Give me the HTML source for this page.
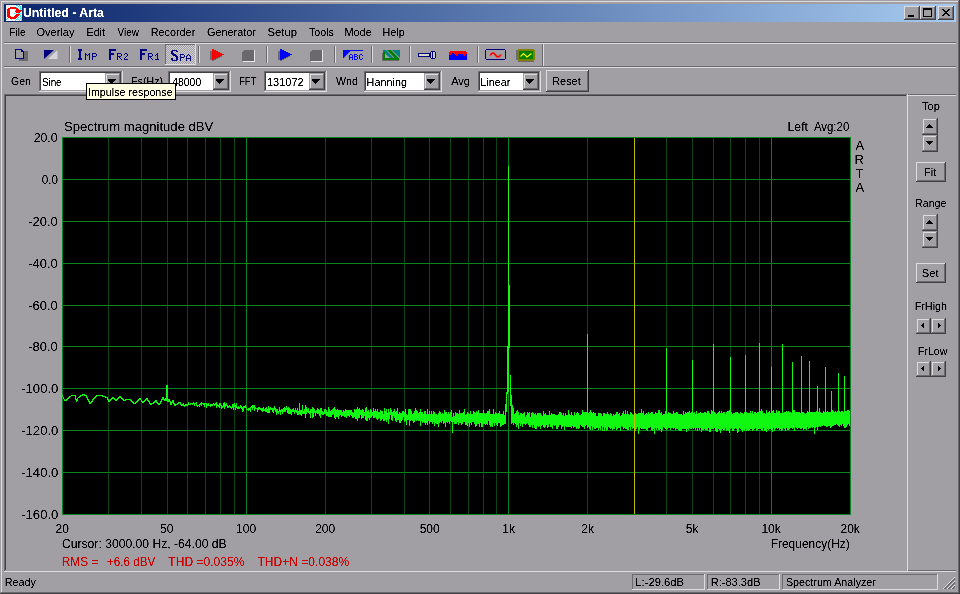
<!DOCTYPE html>
<html><head><meta charset="utf-8"><style>
html,body{margin:0;padding:0;width:960px;height:594px;overflow:hidden;background:#a19fa4;}
svg{display:block;font-family:"Liberation Sans", sans-serif;}
</style></head><body>
<svg width="960" height="594" viewBox="0 0 960 594" shape-rendering="crispEdges">
<defs><filter id="tx" x="0" y="0" width="100%" height="100%" filterUnits="userSpaceOnUse"><feComponentTransfer><feFuncA type="linear" slope="2.5" intercept="-0.6"/></feComponentTransfer></filter></defs>
<rect x="0" y="0" width="960" height="594" fill="#a19fa4"/>
<rect x="1" y="1" width="957" height="1" fill="#dcdcdc"/>
<rect x="1" y="1" width="1" height="591" fill="#dcdcdc"/>
<rect x="1" y="592" width="958" height="1" fill="#6c6a70"/>
<rect x="958" y="1" width="1" height="592" fill="#6c6a70"/>
<rect x="0" y="593" width="960" height="1" fill="#404040"/>
<rect x="959" y="0" width="1" height="594" fill="#404040"/>
<defs><linearGradient id="tg" x1="0" x2="1" y1="0" y2="0"><stop offset="0" stop-color="#0a246a"/><stop offset="1" stop-color="#a6caf0"/></linearGradient></defs>
<rect x="4" y="4" width="952" height="18" fill="url(#tg)"/>
<rect x="6" y="5" width="16" height="16" fill="#e8f4fa"/>
<path d="M16 5h2v1h-2zM19 5h1v1h-1zM18 6h1v1h-1zM20 6h1v1h-1zM16 7h1v1h-1zM20 7h1v1h-1zM17 8h1v1h-1zM20 8h2v1h-2zM20 9h1v1h-1zM15 10h1v1h-1zM16 11h1v1h-1zM17 12h1v1h-1zM14 13h1v1h-1zM18 13h1v1h-1zM20 13h1v1h-1zM17 15h1v1h-1zM20 15h1v1h-1zM20 16h1v1h-1zM8 17h1v1h-1zM18 17h1v1h-1zM21 17h1v1h-1zM7 18h1v1h-1zM17 18h1v1h-1zM20 18h1v1h-1zM6 19h1v1h-1zM11 19h1v1h-1zM16 19h1v1h-1zM18 19h1v1h-1zM21 19h1v1h-1zM15 20h1v1h-1zM19 20h1v1h-1zM21 20h1v1h-1z" fill="#2ee0f0"/>
<path d="M10 7h6v1h-6zM8 8h10v1h-10zM7 9h4v1h-4zM16 9h3v1h-3zM7 10h3v1h-3zM16 10h6v1h-6zM7 11h3v1h-3zM15 11h6v1h-6zM7 12h3v1h-3zM16 12h4v1h-4zM7 13h3v1h-3zM7 14h3v1h-3zM16 14h4v1h-4zM7 15h3v1h-3zM15 15h4v1h-4zM7 16h4v1h-4zM14 16h4v1h-4zM8 17h9v1h-9zM10 18h6v1h-6z" fill="#ff0000"/>
<rect x="10" y="9" width="4" height="7" fill="#ffffff"/>
<rect x="904" y="6" width="16" height="14" fill="#a19fa4"/>
<rect x="904" y="6" width="15" height="1" fill="#dcdcdc"/>
<rect x="904" y="6" width="1" height="13" fill="#dcdcdc"/>
<rect x="905" y="18" width="14" height="1" fill="#6c6a70"/>
<rect x="918" y="7" width="1" height="12" fill="#6c6a70"/>
<rect x="904" y="19" width="16" height="1" fill="#404040"/>
<rect x="919" y="6" width="1" height="14" fill="#404040"/>
<rect x="920" y="6" width="16" height="14" fill="#a19fa4"/>
<rect x="920" y="6" width="15" height="1" fill="#dcdcdc"/>
<rect x="920" y="6" width="1" height="13" fill="#dcdcdc"/>
<rect x="921" y="18" width="14" height="1" fill="#6c6a70"/>
<rect x="934" y="7" width="1" height="12" fill="#6c6a70"/>
<rect x="920" y="19" width="16" height="1" fill="#404040"/>
<rect x="935" y="6" width="1" height="14" fill="#404040"/>
<rect x="938" y="6" width="16" height="14" fill="#a19fa4"/>
<rect x="938" y="6" width="15" height="1" fill="#dcdcdc"/>
<rect x="938" y="6" width="1" height="13" fill="#dcdcdc"/>
<rect x="939" y="18" width="14" height="1" fill="#6c6a70"/>
<rect x="952" y="7" width="1" height="12" fill="#6c6a70"/>
<rect x="938" y="19" width="16" height="1" fill="#404040"/>
<rect x="953" y="6" width="1" height="14" fill="#404040"/>
<rect x="908" y="15" width="6" height="2" fill="#000"/>
<rect x="923" y="8" width="9" height="9" fill="#000"/>
<rect x="924" y="10" width="7" height="6" fill="#a19fa4"/>
<path d="M942 9h2v1h-2zM948 9h2v1h-2zM943 10h2v1h-2zM947 10h2v1h-2zM944 11h4v1h-4zM945 12h2v1h-2zM944 13h4v1h-4zM943 14h2v1h-2zM947 14h2v1h-2zM942 15h2v1h-2zM948 15h2v1h-2z" fill="#000"/>
<rect x="4" y="42" width="952" height="1" fill="#6c6a70"/>
<rect x="4" y="43" width="952" height="1" fill="#dcdcdc"/>
<rect x="4" y="66" width="952" height="1" fill="#6c6a70"/>
<rect x="4" y="67" width="952" height="1" fill="#dcdcdc"/>
<rect x="19" y="51" width="9" height="10" fill="#6c6a70"/>
<path d="M15 49h6v1h-6z M15 49h1v10h-1z M15 58h9v1h-9z M23 52h1v7h-1z M21 49h1v1h-1z M22 50h1v1h-1z M21 50h1v2h-1z M21 51h3v1h-3z" fill="#000080"/>
<rect x="16" y="50" width="5" height="8" fill="#a19fa4"/>
<rect x="16" y="52" width="7" height="6" fill="#a19fa4"/>
<rect x="21" y="52" width="2" height="6" fill="#a19fa4"/>
<path d="M44 50h10l-10 9z" fill="#000080" shape-rendering="auto"/>
<path d="M57.5 50v9h-9.5z" fill="#d6d4da" shape-rendering="auto"/>
<rect x="69" y="46" width="1" height="17" fill="#6c6a70"/>
<rect x="70" y="46" width="1" height="17" fill="#dcdcdc"/>
<rect x="198" y="46" width="1" height="17" fill="#6c6a70"/>
<rect x="199" y="46" width="1" height="17" fill="#dcdcdc"/>
<rect x="266" y="46" width="1" height="17" fill="#6c6a70"/>
<rect x="267" y="46" width="1" height="17" fill="#dcdcdc"/>
<rect x="334" y="46" width="1" height="17" fill="#6c6a70"/>
<rect x="335" y="46" width="1" height="17" fill="#dcdcdc"/>
<rect x="371" y="46" width="1" height="17" fill="#6c6a70"/>
<rect x="372" y="46" width="1" height="17" fill="#dcdcdc"/>
<rect x="409" y="46" width="1" height="17" fill="#6c6a70"/>
<rect x="410" y="46" width="1" height="17" fill="#dcdcdc"/>
<rect x="477" y="46" width="1" height="17" fill="#6c6a70"/>
<rect x="478" y="46" width="1" height="17" fill="#dcdcdc"/>
<path d="M78 49h4v1h-4zM78 50h4v1h-4zM79 51h2v1h-2zM79 52h2v1h-2zM79 53h2v1h-2zM79 54h2v1h-2zM79 55h2v1h-2zM79 56h2v1h-2zM79 57h2v1h-2zM78 58h4v1h-4zM78 59h4v1h-4z" fill="#000080"/>
<path d="M85 53h1v1h-1zM89 53h1v1h-1zM85 54h2v1h-2zM88 54h2v1h-2zM85 55h1v1h-1zM87 55h1v1h-1zM89 55h1v1h-1zM85 56h1v1h-1zM89 56h1v1h-1zM85 57h1v1h-1zM89 57h1v1h-1zM85 58h1v1h-1zM89 58h1v1h-1zM85 59h1v1h-1zM89 59h1v1h-1z" fill="#000080"/>
<path d="M92 53h4v1h-4zM92 54h1v1h-1zM96 54h1v1h-1zM92 55h1v1h-1zM96 55h1v1h-1zM92 56h4v1h-4zM92 57h1v1h-1zM92 58h1v1h-1zM92 59h1v1h-1z" fill="#000080"/>
<path d="M109 49h7v1h-7zM109 50h7v1h-7zM109 51h2v1h-2zM109 52h2v1h-2zM109 53h5v1h-5zM109 54h5v1h-5zM109 55h2v1h-2zM109 56h2v1h-2zM109 57h2v1h-2zM109 58h2v1h-2zM109 59h2v1h-2z" fill="#000080"/>
<path d="M117 53h4v1h-4zM117 54h1v1h-1zM121 54h1v1h-1zM117 55h1v1h-1zM121 55h1v1h-1zM117 56h4v1h-4zM117 57h1v1h-1zM119 57h1v1h-1zM117 58h1v1h-1zM120 58h1v1h-1zM117 59h1v1h-1zM121 59h1v1h-1z" fill="#000080"/>
<path d="M125 53h2v1h-2zM124 54h1v1h-1zM127 54h1v1h-1zM127 55h1v1h-1zM126 56h1v1h-1zM125 57h1v1h-1zM124 58h1v1h-1zM124 59h4v1h-4z" fill="#000080"/>
<path d="M140 49h7v1h-7zM140 50h7v1h-7zM140 51h2v1h-2zM140 52h2v1h-2zM140 53h5v1h-5zM140 54h5v1h-5zM140 55h2v1h-2zM140 56h2v1h-2zM140 57h2v1h-2zM140 58h2v1h-2zM140 59h2v1h-2z" fill="#000080"/>
<path d="M148 53h4v1h-4zM148 54h1v1h-1zM152 54h1v1h-1zM148 55h1v1h-1zM152 55h1v1h-1zM148 56h4v1h-4zM148 57h1v1h-1zM150 57h1v1h-1zM148 58h1v1h-1zM151 58h1v1h-1zM148 59h1v1h-1zM152 59h1v1h-1z" fill="#000080"/>
<path d="M157 53h1v1h-1zM156 54h2v1h-2zM155 55h1v1h-1zM157 55h1v1h-1zM157 56h1v1h-1zM157 57h1v1h-1zM157 58h1v1h-1zM155 59h4v1h-4z" fill="#000080"/>
<defs><pattern id="dith" width="2" height="2" patternUnits="userSpaceOnUse"><rect width="2" height="2" fill="#a19fa4"/><rect width="1" height="1" fill="#d0d0d4"/><rect x="1" y="1" width="1" height="1" fill="#d0d0d4"/></pattern></defs>
<rect x="165" y="44" width="31" height="21" fill="url(#dith)"/>
<rect x="165" y="44" width="30" height="1" fill="#6c6a70"/>
<rect x="165" y="44" width="1" height="20" fill="#6c6a70"/>
<rect x="165" y="64" width="31" height="1" fill="#dcdcdc"/>
<rect x="195" y="44" width="1" height="21" fill="#dcdcdc"/>
<path d="M172 50h5v1h-5zM171 51h2v1h-2zM176 51h2v1h-2zM171 52h2v1h-2zM171 53h3v1h-3zM172 54h4v1h-4zM173 55h4v1h-4zM175 56h3v1h-3zM176 57h2v1h-2zM171 58h2v1h-2zM176 58h2v1h-2zM171 59h2v1h-2zM176 59h2v1h-2zM172 60h5v1h-5z" fill="#000080"/>
<path d="M180 54h4v1h-4zM180 55h1v1h-1zM184 55h1v1h-1zM180 56h1v1h-1zM184 56h1v1h-1zM180 57h4v1h-4zM180 58h1v1h-1zM180 59h1v1h-1zM180 60h1v1h-1z" fill="#000080"/>
<path d="M188 54h1v1h-1zM187 55h1v1h-1zM189 55h1v1h-1zM186 56h1v1h-1zM190 56h1v1h-1zM186 57h1v1h-1zM190 57h1v1h-1zM186 58h5v1h-5zM186 59h1v1h-1zM190 59h1v1h-1zM186 60h1v1h-1zM190 60h1v1h-1z" fill="#000080"/>
<path d="M210 51h2v9h-2zM220 56h2v1h-2zM218 57h2v1h-2zM216 58h2v1h-2zM214 59h2v1h-2zM212 60h2v1h-2z" fill="#6c6a70"/>
<path d="M212 49h2v1h-2zM212 50h4v1h-4zM212 51h6v1h-6zM212 52h8v1h-8zM212 53h10v1h-10zM212 54h12v1h-12zM212 55h10v1h-10zM212 56h8v1h-8zM212 57h6v1h-6zM212 58h4v1h-4zM212 59h2v1h-2z" fill="#ff0000"/>
<path d="M278 51h2v9h-2zM288 56h2v1h-2zM286 57h2v1h-2zM284 58h2v1h-2zM282 59h2v1h-2zM280 60h2v1h-2z" fill="#6c6a70"/>
<path d="M280 49h2v1h-2zM280 50h4v1h-4zM280 51h6v1h-6zM280 52h8v1h-8zM280 53h10v1h-10zM280 54h12v1h-12zM280 55h10v1h-10zM280 56h8v1h-8zM280 57h6v1h-6zM280 58h4v1h-4zM280 59h2v1h-2z" fill="#0000ff"/>
<rect x="243" y="61" width="12" height="1" fill="#e8e8e8"/>
<rect x="254" y="50" width="1" height="12" fill="#e8e8e8"/>
<path d="M244 50h10v11h-12v-9h1v-1h1z" fill="#6a686e"/>
<rect x="311" y="61" width="12" height="1" fill="#e8e8e8"/>
<rect x="322" y="50" width="1" height="12" fill="#e8e8e8"/>
<path d="M312 50h10v11h-12v-9h1v-1h1z" fill="#6a686e"/>
<path d="M343 50h20v1h-12.5l-7.5 7.5z" fill="#0000ff" shape-rendering="auto"/>
<rect x="343" y="50" width="1" height="8" fill="#0000ff"/>
<path d="M350 54h2v1h-2zM349 55h1v1h-1zM352 55h1v1h-1zM349 56h1v1h-1zM352 56h1v1h-1zM349 57h4v1h-4zM349 58h1v1h-1zM352 58h1v1h-1zM349 59h1v1h-1zM352 59h1v1h-1z" fill="#0000ff"/>
<path d="M354 54h3v1h-3zM354 55h1v1h-1zM357 55h1v1h-1zM354 56h3v1h-3zM354 57h1v1h-1zM357 57h1v1h-1zM354 58h1v1h-1zM357 58h1v1h-1zM354 59h3v1h-3z" fill="#0000ff"/>
<path d="M360 54h2v1h-2zM359 55h1v1h-1zM362 55h1v1h-1zM359 56h1v1h-1zM359 57h1v1h-1zM359 58h1v1h-1zM362 58h1v1h-1zM360 59h2v1h-2z" fill="#0000ff"/>
<path d="M392 50h8v8z" fill="#008080" shape-rendering="auto"/>
<path d="M383 50h3l8 8.5h-3.5l-7.5-7z" fill="#008080" shape-rendering="auto"/>
<path d="M387 50h4l9 9.5h-4z" fill="#008000" shape-rendering="auto"/>
<rect x="383" y="52" width="2" height="8" fill="#008000"/>
<rect x="383" y="58" width="16" height="2" fill="#008000"/>
<rect x="382" y="53" width="1" height="8" fill="#6c6a70"/>
<rect x="383" y="60" width="16" height="1" fill="#6c6a70"/>
<rect x="418" y="53" width="12" height="4" fill="#000080"/>
<rect x="419" y="54" width="10" height="2" fill="#d8d8c8"/>
<path d="M431 51h4v1h-4zM430 52h1v1h-1zM432 52h1v1h-1zM435 52h1v1h-1zM430 53h1v1h-1zM432 53h1v1h-1zM435 53h1v1h-1zM430 54h1v1h-1zM432 54h1v1h-1zM435 54h1v1h-1zM430 55h1v1h-1zM432 55h1v1h-1zM435 55h1v1h-1zM430 56h1v1h-1zM432 56h1v1h-1zM435 56h1v1h-1zM430 57h1v1h-1zM432 57h1v1h-1zM435 57h1v1h-1zM431 58h4v1h-4z" fill="#000080"/>
<path d="M431 52h1v1h-1zM433 52h2v1h-2zM431 53h1v1h-1zM433 53h2v1h-2zM431 54h1v1h-1zM433 54h2v1h-2zM431 55h1v1h-1zM433 55h2v1h-2zM431 56h1v1h-1zM433 56h2v1h-2zM431 57h1v1h-1zM433 57h2v1h-2z" fill="#d0d0c0"/>
<rect x="449" y="52" width="18" height="8" fill="#0000ff"/>
<rect x="450" y="51" width="16" height="1" fill="#ff0000"/>
<path d="M449 52h1v3h-1zM450 52h1v3h-1zM451 52h1v2h-1zM452 52h1v1h-1zM453 52h1v1h-1zM454 52h1v2h-1zM455 52h1v3h-1zM456 52h1v4h-1zM457 52h1v3h-1zM458 52h1v2h-1zM459 52h1v1h-1zM460 52h1v2h-1zM461 52h1v3h-1zM462 52h1v2h-1zM463 52h1v3h-1zM464 52h1v4h-1zM465 52h1v3h-1zM466 52h1v2h-1z" fill="#ff0000"/>
<path d="M486 49h19v1h1v9h-1v1h-19v-1h-1v-9h1z M486 50v9h19v-9z" fill="#000080" fill-rule="evenodd"/>
<path d="M490.2 55.5 C491.5 52.5 494 52.5 495.5 55 C497 57.5 499.5 57.5 500.8 54.5" stroke="#ff0000" stroke-width="1.7" fill="none" shape-rendering="auto"/>
<path d="M518 49h16v1h1v10h-1v1h-16v-1h-1v-10h1z" fill="#808000"/>
<rect x="516" y="50" width="1" height="10" fill="#6c6a70"/>
<rect x="518" y="61" width="16" height="1" fill="#6c6a70"/>
<rect x="519" y="51" width="14" height="8" fill="#008000"/>
<path d="M520.5 56.5 L523.5 53.5 L527 57 L531.5 53.5" stroke="#ffff00" stroke-width="1.1" fill="none" shape-rendering="auto"/>
<rect x="542" y="44" width="1" height="22" fill="#6c6a70"/>
<rect x="543" y="44" width="1" height="22" fill="#dcdcdc"/>
<rect x="39" y="71" width="84" height="21" fill="#ffffff"/>
<rect x="39" y="71" width="83" height="1" fill="#6c6a70"/>
<rect x="39" y="71" width="1" height="20" fill="#6c6a70"/>
<rect x="40" y="72" width="81" height="1" fill="#404040"/>
<rect x="40" y="72" width="1" height="18" fill="#404040"/>
<rect x="40" y="90" width="82" height="1" fill="#a19fa4"/>
<rect x="121" y="72" width="1" height="19" fill="#a19fa4"/>
<rect x="39" y="91" width="84" height="1" fill="#dcdcdc"/>
<rect x="122" y="71" width="1" height="21" fill="#dcdcdc"/>
<rect x="105" y="73" width="16" height="17" fill="#a19fa4"/>
<rect x="105" y="73" width="15" height="1" fill="#a19fa4"/>
<rect x="105" y="73" width="1" height="16" fill="#a19fa4"/>
<rect x="106" y="74" width="13" height="1" fill="#dcdcdc"/>
<rect x="106" y="74" width="1" height="14" fill="#dcdcdc"/>
<rect x="106" y="88" width="14" height="1" fill="#6c6a70"/>
<rect x="119" y="74" width="1" height="15" fill="#6c6a70"/>
<rect x="105" y="89" width="16" height="1" fill="#404040"/>
<rect x="120" y="73" width="1" height="17" fill="#404040"/>
<path d="M109 79h7v1h-1v1h-1v1h-1v1h-1v1h-1v-1h-1v-1h-1v-1h-1v-1h-1z" fill="#000"/>
<rect x="168" y="71" width="63" height="21" fill="#ffffff"/>
<rect x="168" y="71" width="62" height="1" fill="#6c6a70"/>
<rect x="168" y="71" width="1" height="20" fill="#6c6a70"/>
<rect x="169" y="72" width="60" height="1" fill="#404040"/>
<rect x="169" y="72" width="1" height="18" fill="#404040"/>
<rect x="169" y="90" width="61" height="1" fill="#a19fa4"/>
<rect x="229" y="72" width="1" height="19" fill="#a19fa4"/>
<rect x="168" y="91" width="63" height="1" fill="#dcdcdc"/>
<rect x="230" y="71" width="1" height="21" fill="#dcdcdc"/>
<rect x="213" y="73" width="16" height="17" fill="#a19fa4"/>
<rect x="213" y="73" width="15" height="1" fill="#a19fa4"/>
<rect x="213" y="73" width="1" height="16" fill="#a19fa4"/>
<rect x="214" y="74" width="13" height="1" fill="#dcdcdc"/>
<rect x="214" y="74" width="1" height="14" fill="#dcdcdc"/>
<rect x="214" y="88" width="14" height="1" fill="#6c6a70"/>
<rect x="227" y="74" width="1" height="15" fill="#6c6a70"/>
<rect x="213" y="89" width="16" height="1" fill="#404040"/>
<rect x="228" y="73" width="1" height="17" fill="#404040"/>
<path d="M217 79h7v1h-1v1h-1v1h-1v1h-1v1h-1v-1h-1v-1h-1v-1h-1v-1h-1z" fill="#000"/>
<rect x="264" y="71" width="63" height="21" fill="#ffffff"/>
<rect x="264" y="71" width="62" height="1" fill="#6c6a70"/>
<rect x="264" y="71" width="1" height="20" fill="#6c6a70"/>
<rect x="265" y="72" width="60" height="1" fill="#404040"/>
<rect x="265" y="72" width="1" height="18" fill="#404040"/>
<rect x="265" y="90" width="61" height="1" fill="#a19fa4"/>
<rect x="325" y="72" width="1" height="19" fill="#a19fa4"/>
<rect x="264" y="91" width="63" height="1" fill="#dcdcdc"/>
<rect x="326" y="71" width="1" height="21" fill="#dcdcdc"/>
<rect x="309" y="73" width="16" height="17" fill="#a19fa4"/>
<rect x="309" y="73" width="15" height="1" fill="#a19fa4"/>
<rect x="309" y="73" width="1" height="16" fill="#a19fa4"/>
<rect x="310" y="74" width="13" height="1" fill="#dcdcdc"/>
<rect x="310" y="74" width="1" height="14" fill="#dcdcdc"/>
<rect x="310" y="88" width="14" height="1" fill="#6c6a70"/>
<rect x="323" y="74" width="1" height="15" fill="#6c6a70"/>
<rect x="309" y="89" width="16" height="1" fill="#404040"/>
<rect x="324" y="73" width="1" height="17" fill="#404040"/>
<path d="M313 79h7v1h-1v1h-1v1h-1v1h-1v1h-1v-1h-1v-1h-1v-1h-1v-1h-1z" fill="#000"/>
<rect x="364" y="71" width="78" height="21" fill="#ffffff"/>
<rect x="364" y="71" width="77" height="1" fill="#6c6a70"/>
<rect x="364" y="71" width="1" height="20" fill="#6c6a70"/>
<rect x="365" y="72" width="75" height="1" fill="#404040"/>
<rect x="365" y="72" width="1" height="18" fill="#404040"/>
<rect x="365" y="90" width="76" height="1" fill="#a19fa4"/>
<rect x="440" y="72" width="1" height="19" fill="#a19fa4"/>
<rect x="364" y="91" width="78" height="1" fill="#dcdcdc"/>
<rect x="441" y="71" width="1" height="21" fill="#dcdcdc"/>
<rect x="424" y="73" width="16" height="17" fill="#a19fa4"/>
<rect x="424" y="73" width="15" height="1" fill="#a19fa4"/>
<rect x="424" y="73" width="1" height="16" fill="#a19fa4"/>
<rect x="425" y="74" width="13" height="1" fill="#dcdcdc"/>
<rect x="425" y="74" width="1" height="14" fill="#dcdcdc"/>
<rect x="425" y="88" width="14" height="1" fill="#6c6a70"/>
<rect x="438" y="74" width="1" height="15" fill="#6c6a70"/>
<rect x="424" y="89" width="16" height="1" fill="#404040"/>
<rect x="439" y="73" width="1" height="17" fill="#404040"/>
<path d="M428 79h7v1h-1v1h-1v1h-1v1h-1v1h-1v-1h-1v-1h-1v-1h-1v-1h-1z" fill="#000"/>
<rect x="478" y="71" width="63" height="21" fill="#ffffff"/>
<rect x="478" y="71" width="62" height="1" fill="#6c6a70"/>
<rect x="478" y="71" width="1" height="20" fill="#6c6a70"/>
<rect x="479" y="72" width="60" height="1" fill="#404040"/>
<rect x="479" y="72" width="1" height="18" fill="#404040"/>
<rect x="479" y="90" width="61" height="1" fill="#a19fa4"/>
<rect x="539" y="72" width="1" height="19" fill="#a19fa4"/>
<rect x="478" y="91" width="63" height="1" fill="#dcdcdc"/>
<rect x="540" y="71" width="1" height="21" fill="#dcdcdc"/>
<rect x="523" y="73" width="16" height="17" fill="#a19fa4"/>
<rect x="523" y="73" width="15" height="1" fill="#a19fa4"/>
<rect x="523" y="73" width="1" height="16" fill="#a19fa4"/>
<rect x="524" y="74" width="13" height="1" fill="#dcdcdc"/>
<rect x="524" y="74" width="1" height="14" fill="#dcdcdc"/>
<rect x="524" y="88" width="14" height="1" fill="#6c6a70"/>
<rect x="537" y="74" width="1" height="15" fill="#6c6a70"/>
<rect x="523" y="89" width="16" height="1" fill="#404040"/>
<rect x="538" y="73" width="1" height="17" fill="#404040"/>
<path d="M527 79h7v1h-1v1h-1v1h-1v1h-1v1h-1v-1h-1v-1h-1v-1h-1v-1h-1z" fill="#000"/>
<rect x="546" y="70" width="43" height="22" fill="#a19fa4"/>
<rect x="546" y="70" width="42" height="1" fill="#dcdcdc"/>
<rect x="546" y="70" width="1" height="21" fill="#dcdcdc"/>
<rect x="547" y="90" width="41" height="1" fill="#6c6a70"/>
<rect x="587" y="71" width="1" height="20" fill="#6c6a70"/>
<rect x="546" y="91" width="43" height="1" fill="#404040"/>
<rect x="588" y="70" width="1" height="22" fill="#404040"/>
<rect x="4" y="94" width="903" height="1" fill="#6c6a70"/>
<rect x="4" y="94" width="1" height="477" fill="#6c6a70"/>
<rect x="5" y="95" width="901" height="1" fill="#404040"/>
<rect x="5" y="95" width="1" height="475" fill="#404040"/>
<rect x="4" y="571" width="904" height="1" fill="#dcdcdc"/>
<rect x="907" y="94" width="1" height="478" fill="#dcdcdc"/>
<rect x="908" y="94" width="48" height="1" fill="#6c6a70"/>
<rect x="908" y="95" width="48" height="1" fill="#dcdcdc"/>
<rect x="908" y="570" width="48" height="1" fill="#6c6a70"/>
<rect x="908" y="571" width="48" height="1" fill="#dcdcdc"/>
<rect x="62" y="137" width="789" height="378" fill="#000000"/>
<rect x="108" y="138" width="1" height="376" fill="#0c4416"/>
<rect x="141" y="138" width="1" height="376" fill="#0c4416"/>
<rect x="167" y="138" width="1" height="376" fill="#0c4416"/>
<rect x="187" y="138" width="1" height="376" fill="#0c4416"/>
<rect x="205" y="138" width="1" height="376" fill="#0c4416"/>
<rect x="220" y="138" width="1" height="376" fill="#0c4416"/>
<rect x="234" y="138" width="1" height="376" fill="#0c4416"/>
<rect x="325" y="138" width="1" height="376" fill="#0c4416"/>
<rect x="371" y="138" width="1" height="376" fill="#0c4416"/>
<rect x="404" y="138" width="1" height="376" fill="#0c4416"/>
<rect x="429" y="138" width="1" height="376" fill="#0c4416"/>
<rect x="450" y="138" width="1" height="376" fill="#0c4416"/>
<rect x="468" y="138" width="1" height="376" fill="#0c4416"/>
<rect x="483" y="138" width="1" height="376" fill="#0c4416"/>
<rect x="496" y="138" width="1" height="376" fill="#0c4416"/>
<rect x="587" y="138" width="1" height="376" fill="#0c4416"/>
<rect x="634" y="138" width="1" height="376" fill="#0c4416"/>
<rect x="666" y="138" width="1" height="376" fill="#0c4416"/>
<rect x="692" y="138" width="1" height="376" fill="#0c4416"/>
<rect x="713" y="138" width="1" height="376" fill="#0c4416"/>
<rect x="730" y="138" width="1" height="376" fill="#0c4416"/>
<rect x="745" y="138" width="1" height="376" fill="#0c4416"/>
<rect x="759" y="138" width="1" height="376" fill="#0c4416"/>
<rect x="246" y="138" width="1" height="376" fill="#0a8420"/>
<rect x="508" y="138" width="1" height="376" fill="#0a8420"/>
<rect x="771" y="138" width="1" height="376" fill="#0a8420"/>
<rect x="63" y="179" width="787" height="1" fill="#0a8420"/>
<rect x="63" y="221" width="787" height="1" fill="#0a8420"/>
<rect x="63" y="263" width="787" height="1" fill="#0a8420"/>
<rect x="63" y="305" width="787" height="1" fill="#0a8420"/>
<rect x="63" y="346" width="787" height="1" fill="#0a8420"/>
<rect x="63" y="388" width="787" height="1" fill="#0a8420"/>
<rect x="63" y="430" width="787" height="1" fill="#0a8420"/>
<rect x="63" y="472" width="787" height="1" fill="#0a8420"/>
<rect x="62" y="137" width="789" height="1" fill="#0a8420"/>
<rect x="62" y="514" width="789" height="1" fill="#0a8420"/>
<rect x="62" y="137" width="1" height="378" fill="#0a8420"/>
<rect x="850" y="137" width="1" height="378" fill="#0a8420"/>
<path d="M62 395h1V397h-1ZM63 397h1V399h-1ZM64 399h1V401h-1ZM65 400h1V401h-1ZM66 399h1V401h-1ZM67 398h1V400h-1ZM68 397h1V399h-1ZM69 396h1V398h-1ZM70 396h1V397h-1ZM71 395h1V396h-1ZM72 395h1V396h-1ZM73 395h1V396h-1ZM74 395h1V396h-1ZM75 395h1V400h-1ZM76 399h1V402h-1ZM77 398h1V401h-1ZM78 397h1V398h-1ZM79 396h1V398h-1ZM80 395h1V397h-1ZM81 395h1V396h-1ZM82 394h1V396h-1ZM83 394h1V395h-1ZM84 394h1V396h-1ZM85 395h1V396h-1ZM86 395h1V398h-1ZM87 397h1V400h-1ZM88 399h1V402h-1ZM89 401h1V404h-1ZM90 402h1V404h-1ZM91 401h1V403h-1ZM92 399h1V402h-1ZM93 398h1V400h-1ZM94 397h1V399h-1ZM95 396h1V398h-1ZM96 395h1V397h-1ZM97 395h1V396h-1ZM98 395h1V396h-1ZM99 395h1V396h-1ZM100 395h1V396h-1ZM101 395h1V396h-1ZM102 395h1V397h-1ZM103 396h1V397h-1ZM104 396h1V397h-1ZM105 396h1V398h-1ZM106 397h1V398h-1ZM107 397h1V400h-1ZM108 399h1V402h-1ZM109 400h1V402h-1ZM110 399h1V401h-1ZM111 398h1V400h-1ZM112 397h1V399h-1ZM113 397h1V399h-1ZM114 398h1V400h-1ZM115 399h1V401h-1ZM116 399h1V401h-1ZM117 398h1V400h-1ZM118 397h1V399h-1ZM119 396h1V398h-1ZM120 396h1V398h-1ZM121 397h1V399h-1ZM122 398h1V400h-1ZM123 399h1V401h-1ZM124 400h1V401h-1ZM125 399h1V401h-1ZM126 399h1V400h-1ZM127 399h1V400h-1ZM128 399h1V400h-1ZM129 399h1V400h-1ZM130 399h1V401h-1ZM131 400h1V402h-1ZM132 401h1V403h-1ZM133 402h1V404h-1ZM134 403h1V404h-1ZM135 402h1V404h-1ZM136 401h1V403h-1ZM137 400h1V402h-1ZM138 399h1V401h-1ZM139 398h1V400h-1ZM140 398h1V400h-1ZM141 400h1V402h-1ZM142 401h1V403h-1ZM143 401h1V403h-1ZM144 400h1V402h-1ZM145 399h1V401h-1ZM146 398h1V400h-1ZM147 398h1V401h-1ZM148 400h1V402h-1ZM149 401h1V404h-1ZM150 403h1V405h-1ZM151 403h1V405h-1ZM152 403h1V404h-1ZM153 402h1V404h-1ZM154 401h1V403h-1ZM155 400h1V402h-1ZM156 400h1V403h-1ZM157 402h1V404h-1ZM158 403h1V405h-1ZM159 403h1V405h-1ZM160 401h1V404h-1ZM161 399h1V402h-1ZM162 397h1V400h-1ZM163 397h1V400h-1ZM164 399h1V401h-1ZM165 398h1V401h-1ZM166 385h1V401h-1ZM167 385h1V402h-1ZM168 399h1V402h-1ZM169 399h1V402h-1ZM170 401h1V405h-1ZM171 402h1V405h-1ZM172 400h1V403h-1ZM173 400h1V404h-1ZM174 403h1V406h-1ZM175 404h1V406h-1ZM176 404h1V405h-1ZM177 403h1V405h-1ZM178 402h1V404h-1ZM179 402h1V403h-1ZM180 402h1V405h-1ZM181 404h1V406h-1ZM182 404h1V406h-1ZM183 403h1V406h-1ZM184 405h1V407h-1ZM185 404h1V406h-1ZM186 404h1V406h-1ZM187 404h1V406h-1ZM188 402h1V405h-1ZM189 404h1V405h-1ZM190 403h1V405h-1ZM191 403h1V404h-1ZM192 403h1V405h-1ZM193 402h1V404h-1ZM194 403h1V406h-1ZM195 403h1V404h-1ZM196 402h1V406h-1ZM197 405h1V407h-1ZM198 405h1V406h-1ZM199 404h1V407h-1ZM200 403h1V405h-1ZM201 402h1V406h-1ZM202 403h1V404h-1ZM203 403h1V405h-1ZM204 403h1V407h-1ZM205 403h1V404h-1ZM206 403h1V408h-1ZM207 404h1V406h-1ZM208 403h1V406h-1ZM209 405h1V406h-1ZM210 404h1V407h-1ZM211 404h1V406h-1ZM212 404h1V406h-1ZM213 403h1V405h-1ZM214 404h1V406h-1ZM215 403h1V405h-1ZM216 402h1V408h-1ZM217 404h1V406h-1ZM218 405h1V407h-1ZM219 403h1V408h-1ZM220 403h1V406h-1ZM221 405h1V409h-1ZM222 406h1V408h-1ZM223 403h1V407h-1ZM224 402h1V409h-1ZM225 404h1V407h-1ZM226 403h1V406h-1ZM227 405h1V408h-1ZM228 406h1V408h-1ZM229 405h1V407h-1ZM230 406h1V408h-1ZM231 407h1V409h-1ZM232 404h1V408h-1ZM233 404h1V410h-1ZM234 403h1V407h-1ZM235 405h1V410h-1ZM236 403h1V408h-1ZM237 407h1V409h-1ZM238 406h1V409h-1ZM239 407h1V409h-1ZM240 405h1V408h-1ZM241 406h1V409h-1ZM242 407h1V412h-1ZM243 406h1V411h-1ZM244 406h1V408h-1ZM245 405h1V408h-1ZM246 407h1V410h-1ZM247 409h1V410h-1ZM248 408h1V411h-1ZM249 408h1V410h-1ZM250 407h1V412h-1ZM251 406h1V408h-1ZM252 405h1V410h-1ZM253 405h1V408h-1ZM254 405h1V411h-1ZM255 407h1V409h-1ZM256 408h1V409h-1ZM257 408h1V412h-1ZM258 407h1V410h-1ZM259 407h1V409h-1ZM260 408h1V410h-1ZM261 408h1V411h-1ZM262 408h1V412h-1ZM263 407h1V411h-1ZM264 409h1V411h-1ZM265 408h1V412h-1ZM266 407h1V412h-1ZM267 409h1V413h-1ZM268 406h1V413h-1ZM269 408h1V413h-1ZM270 407h1V410h-1ZM271 408h1V410h-1ZM272 408h1V412h-1ZM273 408h1V413h-1ZM274 406h1V410h-1ZM275 408h1V412h-1ZM276 409h1V415h-1ZM277 409h1V413h-1ZM278 411h1V414h-1ZM279 407h1V412h-1ZM280 410h1V415h-1ZM281 409h1V412h-1ZM282 409h1V414h-1ZM283 408h1V412h-1ZM284 407h1V412h-1ZM285 408h1V412h-1ZM286 406h1V410h-1ZM287 408h1V413h-1ZM288 407h1V414h-1ZM289 408h1V414h-1ZM290 409h1V414h-1ZM291 410h1V415h-1ZM292 409h1V412h-1ZM293 408h1V412h-1ZM294 410h1V414h-1ZM295 408h1V412h-1ZM296 410h1V413h-1ZM297 408h1V415h-1ZM298 411h1V415h-1ZM299 403h1V414h-1ZM300 410h1V415h-1ZM301 410h1V416h-1ZM302 405h1V414h-1ZM303 411h1V414h-1ZM304 409h1V414h-1ZM305 405h1V418h-1ZM306 407h1V414h-1ZM307 409h1V412h-1ZM308 408h1V413h-1ZM309 411h1V414h-1ZM310 409h1V418h-1ZM311 409h1V413h-1ZM312 407h1V418h-1ZM313 408h1V417h-1ZM314 409h1V413h-1ZM315 411h1V416h-1ZM316 410h1V413h-1ZM317 408h1V414h-1ZM318 409h1V414h-1ZM319 410h1V416h-1ZM320 408h1V418h-1ZM321 408h1V414h-1ZM322 411h1V415h-1ZM323 412h1V415h-1ZM324 409h1V414h-1ZM325 409h1V414h-1ZM326 410h1V416h-1ZM327 412h1V416h-1ZM328 407h1V417h-1ZM329 409h1V417h-1ZM330 411h1V417h-1ZM331 410h1V417h-1ZM332 409h1V415h-1ZM333 408h1V414h-1ZM334 407h1V418h-1ZM335 409h1V419h-1ZM336 410h1V417h-1ZM337 409h1V417h-1ZM338 410h1V419h-1ZM339 410h1V416h-1ZM340 410h1V415h-1ZM341 410h1V417h-1ZM342 412h1V416h-1ZM343 410h1V416h-1ZM344 411h1V417h-1ZM345 409h1V417h-1ZM346 410h1V418h-1ZM347 410h1V416h-1ZM348 410h1V416h-1ZM349 410h1V417h-1ZM350 410h1V415h-1ZM351 410h1V416h-1ZM352 412h1V418h-1ZM353 413h1V418h-1ZM354 409h1V417h-1ZM355 410h1V419h-1ZM356 409h1V419h-1ZM357 407h1V421h-1ZM358 409h1V418h-1ZM359 408h1V418h-1ZM360 410h1V415h-1ZM361 410h1V419h-1ZM362 409h1V418h-1ZM363 410h1V418h-1ZM364 412h1V416h-1ZM365 408h1V420h-1ZM366 407h1V421h-1ZM367 411h1V421h-1ZM368 410h1V418h-1ZM369 412h1V420h-1ZM370 409h1V418h-1ZM371 410h1V417h-1ZM372 412h1V416h-1ZM373 408h1V418h-1ZM374 411h1V418h-1ZM375 409h1V417h-1ZM376 411h1V419h-1ZM377 409h1V420h-1ZM378 412h1V419h-1ZM379 412h1V418h-1ZM380 410h1V421h-1ZM381 411h1V420h-1ZM382 411h1V419h-1ZM383 414h1V421h-1ZM384 408h1V421h-1ZM385 411h1V420h-1ZM386 409h1V422h-1ZM387 413h1V420h-1ZM388 409h1V424h-1ZM389 412h1V419h-1ZM390 408h1V415h-1ZM391 410h1V420h-1ZM392 412h1V421h-1ZM393 411h1V416h-1ZM394 409h1V418h-1ZM395 412h1V421h-1ZM396 411h1V422h-1ZM397 408h1V420h-1ZM398 414h1V420h-1ZM399 412h1V423h-1ZM400 413h1V423h-1ZM401 413h1V421h-1ZM402 411h1V420h-1ZM403 411h1V417h-1ZM404 412h1V422h-1ZM405 409h1V421h-1ZM406 414h1V425h-1ZM407 415h1V420h-1ZM408 409h1V420h-1ZM409 409h1V426h-1ZM410 409h1V421h-1ZM411 411h1V420h-1ZM412 414h1V421h-1ZM413 413h1V423h-1ZM414 411h1V422h-1ZM415 408h1V420h-1ZM416 410h1V421h-1ZM417 411h1V420h-1ZM418 413h1V421h-1ZM419 412h1V421h-1ZM420 409h1V426h-1ZM421 412h1V421h-1ZM422 412h1V423h-1ZM423 414h1V422h-1ZM424 411h1V423h-1ZM425 411h1V425h-1ZM426 414h1V423h-1ZM427 409h1V425h-1ZM428 414h1V421h-1ZM429 411h1V424h-1ZM430 414h1V422h-1ZM431 411h1V422h-1ZM432 414h1V424h-1ZM433 411h1V422h-1ZM434 412h1V426h-1ZM435 414h1V423h-1ZM436 414h1V424h-1ZM437 415h1V424h-1ZM438 413h1V427h-1ZM439 411h1V423h-1ZM440 412h1V422h-1ZM441 414h1V423h-1ZM442 413h1V421h-1ZM443 414h1V424h-1ZM444 410h1V423h-1ZM445 412h1V427h-1ZM446 412h1V422h-1ZM447 414h1V423h-1ZM448 412h1V422h-1ZM449 414h1V424h-1ZM450 412h1V421h-1ZM451 410h1V422h-1ZM452 417h1V433h-1ZM453 413h1V422h-1ZM454 416h1V424h-1ZM455 412h1V424h-1ZM456 413h1V424h-1ZM457 413h1V422h-1ZM458 414h1V425h-1ZM459 410h1V423h-1ZM460 413h1V423h-1ZM461 413h1V425h-1ZM462 413h1V424h-1ZM463 412h1V422h-1ZM464 409h1V422h-1ZM465 415h1V425h-1ZM466 414h1V425h-1ZM467 412h1V426h-1ZM468 413h1V423h-1ZM469 414h1V427h-1ZM470 411h1V423h-1ZM471 414h1V425h-1ZM472 414h1V422h-1ZM473 411h1V422h-1ZM474 412h1V424h-1ZM475 413h1V427h-1ZM476 411h1V426h-1ZM477 412h1V424h-1ZM478 410h1V424h-1ZM479 413h1V427h-1ZM480 413h1V423h-1ZM481 413h1V427h-1ZM482 413h1V427h-1ZM483 410h1V424h-1ZM484 413h1V424h-1ZM485 414h1V425h-1ZM486 413h1V424h-1ZM487 411h1V425h-1ZM488 411h1V421h-1ZM489 409h1V425h-1ZM490 414h1V427h-1ZM491 414h1V426h-1ZM492 414h1V427h-1ZM493 409h1V423h-1ZM494 414h1V426h-1ZM495 412h1V423h-1ZM496 413h1V425h-1ZM497 414h1V426h-1ZM498 413h1V423h-1ZM499 411h1V423h-1ZM500 414h1V427h-1ZM501 414h1V426h-1ZM502 414h1V425h-1ZM503 411h1V425h-1ZM504 415h1V424h-1ZM505 404h1V424h-1ZM506 392h1V412h-1ZM507 346h1V394h-1ZM508 166h1V392h-1ZM509 285h1V348h-1ZM510 375h1V406h-1ZM511 395h1V424h-1ZM512 405h1V423h-1ZM513 408h1V425h-1ZM514 414h1V423h-1ZM515 413h1V424h-1ZM516 411h1V427h-1ZM517 410h1V425h-1ZM518 412h1V429h-1ZM519 415h1V423h-1ZM520 413h1V426h-1ZM521 413h1V424h-1ZM522 414h1V427h-1ZM523 413h1V424h-1ZM524 412h1V424h-1ZM525 417h1V425h-1ZM526 415h1V424h-1ZM527 412h1V423h-1ZM528 413h1V425h-1ZM529 412h1V427h-1ZM530 417h1V427h-1ZM531 413h1V425h-1ZM532 412h1V428h-1ZM533 413h1V425h-1ZM534 414h1V428h-1ZM535 413h1V429h-1ZM536 415h1V429h-1ZM537 413h1V426h-1ZM538 413h1V427h-1ZM539 413h1V426h-1ZM540 413h1V429h-1ZM541 415h1V426h-1ZM542 416h1V425h-1ZM543 411h1V427h-1ZM544 414h1V428h-1ZM545 413h1V427h-1ZM546 415h1V425h-1ZM547 415h1V428h-1ZM548 415h1V427h-1ZM549 411h1V424h-1ZM550 415h1V427h-1ZM551 413h1V427h-1ZM552 414h1V429h-1ZM553 414h1V425h-1ZM554 414h1V426h-1ZM555 415h1V425h-1ZM556 415h1V429h-1ZM557 415h1V429h-1ZM558 414h1V427h-1ZM559 412h1V425h-1ZM560 412h1V425h-1ZM561 413h1V429h-1ZM562 415h1V427h-1ZM563 413h1V426h-1ZM564 416h1V430h-1ZM565 413h1V426h-1ZM566 415h1V427h-1ZM567 415h1V427h-1ZM568 410h1V427h-1ZM569 414h1V427h-1ZM570 415h1V427h-1ZM571 412h1V428h-1ZM572 415h1V426h-1ZM573 416h1V428h-1ZM574 412h1V427h-1ZM575 415h1V427h-1ZM576 413h1V429h-1ZM577 412h1V428h-1ZM578 413h1V429h-1ZM579 415h1V428h-1ZM580 415h1V425h-1ZM581 414h1V426h-1ZM582 410h1V427h-1ZM583 412h1V427h-1ZM584 412h1V429h-1ZM585 412h1V426h-1ZM586 412h1V425h-1ZM587 334h1V428h-1ZM588 413h1V427h-1ZM589 412h1V429h-1ZM590 410h1V430h-1ZM591 412h1V426h-1ZM592 413h1V430h-1ZM593 412h1V427h-1ZM594 413h1V429h-1ZM595 413h1V429h-1ZM596 416h1V428h-1ZM597 416h1V428h-1ZM598 413h1V430h-1ZM599 413h1V428h-1ZM600 413h1V430h-1ZM601 414h1V426h-1ZM602 416h1V431h-1ZM603 413h1V427h-1ZM604 413h1V431h-1ZM605 414h1V428h-1ZM606 414h1V431h-1ZM607 412h1V430h-1ZM608 414h1V427h-1ZM609 415h1V428h-1ZM610 413h1V429h-1ZM611 414h1V428h-1ZM612 416h1V430h-1ZM613 414h1V429h-1ZM614 415h1V429h-1ZM615 414h1V427h-1ZM616 412h1V430h-1ZM617 412h1V429h-1ZM618 414h1V428h-1ZM619 413h1V428h-1ZM620 416h1V431h-1ZM621 415h1V426h-1ZM622 413h1V427h-1ZM623 411h1V429h-1ZM624 414h1V428h-1ZM625 410h1V429h-1ZM626 414h1V429h-1ZM627 411h1V430h-1ZM628 414h1V430h-1ZM629 415h1V427h-1ZM630 412h1V430h-1ZM631 413h1V427h-1ZM632 414h1V429h-1ZM633 415h1V428h-1ZM634 411h1V428h-1ZM635 413h1V431h-1ZM636 414h1V429h-1ZM637 414h1V427h-1ZM638 413h1V434h-1ZM639 413h1V430h-1ZM640 413h1V428h-1ZM641 409h1V429h-1ZM642 413h1V429h-1ZM643 411h1V429h-1ZM644 415h1V429h-1ZM645 414h1V429h-1ZM646 413h1V430h-1ZM647 414h1V431h-1ZM648 412h1V428h-1ZM649 414h1V428h-1ZM650 413h1V427h-1ZM651 412h1V430h-1ZM652 412h1V431h-1ZM653 414h1V429h-1ZM654 414h1V434h-1ZM655 412h1V428h-1ZM656 413h1V430h-1ZM657 413h1V428h-1ZM658 410h1V430h-1ZM659 410h1V430h-1ZM660 413h1V429h-1ZM661 412h1V432h-1ZM662 415h1V430h-1ZM663 414h1V427h-1ZM664 414h1V428h-1ZM665 411h1V429h-1ZM666 348h1V430h-1ZM667 414h1V429h-1ZM668 412h1V428h-1ZM669 413h1V428h-1ZM670 413h1V430h-1ZM671 414h1V428h-1ZM672 414h1V428h-1ZM673 411h1V429h-1ZM674 413h1V428h-1ZM675 413h1V430h-1ZM676 412h1V429h-1ZM677 412h1V429h-1ZM678 414h1V430h-1ZM679 414h1V431h-1ZM680 414h1V431h-1ZM681 414h1V431h-1ZM682 415h1V429h-1ZM683 411h1V429h-1ZM684 414h1V429h-1ZM685 412h1V429h-1ZM686 413h1V432h-1ZM687 412h1V429h-1ZM688 412h1V430h-1ZM689 411h1V428h-1ZM690 413h1V429h-1ZM691 412h1V429h-1ZM692 360h1V428h-1ZM693 413h1V429h-1ZM694 412h1V428h-1ZM695 414h1V430h-1ZM696 411h1V428h-1ZM697 414h1V431h-1ZM698 413h1V428h-1ZM699 413h1V430h-1ZM700 412h1V428h-1ZM701 413h1V432h-1ZM702 413h1V430h-1ZM703 413h1V430h-1ZM704 412h1V429h-1ZM705 412h1V430h-1ZM706 413h1V430h-1ZM707 411h1V431h-1ZM708 411h1V428h-1ZM709 413h1V432h-1ZM710 414h1V432h-1ZM711 410h1V429h-1ZM712 411h1V429h-1ZM713 344h1V429h-1ZM714 412h1V428h-1ZM715 413h1V431h-1ZM716 414h1V432h-1ZM717 413h1V432h-1ZM718 412h1V429h-1ZM719 411h1V430h-1ZM720 413h1V433h-1ZM721 411h1V430h-1ZM722 413h1V429h-1ZM723 412h1V430h-1ZM724 412h1V430h-1ZM725 414h1V428h-1ZM726 412h1V431h-1ZM727 411h1V430h-1ZM728 411h1V431h-1ZM729 410h1V433h-1ZM730 357h1V429h-1ZM731 412h1V428h-1ZM732 414h1V431h-1ZM733 413h1V431h-1ZM734 413h1V429h-1ZM735 412h1V428h-1ZM736 412h1V429h-1ZM737 412h1V433h-1ZM738 413h1V432h-1ZM739 414h1V428h-1ZM740 412h1V429h-1ZM741 413h1V430h-1ZM742 413h1V432h-1ZM743 414h1V430h-1ZM744 412h1V431h-1ZM745 355h1V429h-1ZM746 412h1V431h-1ZM747 413h1V430h-1ZM748 413h1V431h-1ZM749 413h1V430h-1ZM750 411h1V429h-1ZM751 413h1V429h-1ZM752 411h1V431h-1ZM753 414h1V430h-1ZM754 412h1V429h-1ZM755 412h1V428h-1ZM756 413h1V431h-1ZM757 412h1V430h-1ZM758 412h1V429h-1ZM759 343h1V429h-1ZM760 411h1V429h-1ZM761 409h1V430h-1ZM762 411h1V431h-1ZM763 413h1V428h-1ZM764 413h1V431h-1ZM765 414h1V431h-1ZM766 410h1V432h-1ZM767 413h1V429h-1ZM768 412h1V430h-1ZM769 411h1V429h-1ZM770 413h1V429h-1ZM771 367h1V430h-1ZM772 411h1V432h-1ZM773 410h1V428h-1ZM774 413h1V431h-1ZM775 413h1V429h-1ZM776 410h1V428h-1ZM777 412h1V429h-1ZM778 411h1V428h-1ZM779 411h1V430h-1ZM780 413h1V429h-1ZM781 413h1V431h-1ZM782 344h1V430h-1ZM783 413h1V428h-1ZM784 412h1V429h-1ZM785 412h1V431h-1ZM786 411h1V428h-1ZM787 412h1V430h-1ZM788 411h1V430h-1ZM789 412h1V429h-1ZM790 412h1V428h-1ZM791 413h1V428h-1ZM792 362h1V429h-1ZM793 410h1V428h-1ZM794 410h1V431h-1ZM795 412h1V427h-1ZM796 412h1V428h-1ZM797 412h1V429h-1ZM798 412h1V428h-1ZM799 412h1V428h-1ZM800 413h1V429h-1ZM801 356h1V429h-1ZM802 412h1V428h-1ZM803 412h1V430h-1ZM804 413h1V429h-1ZM805 414h1V429h-1ZM806 413h1V430h-1ZM807 411h1V427h-1ZM808 412h1V429h-1ZM809 361h1V428h-1ZM810 412h1V428h-1ZM811 412h1V427h-1ZM812 412h1V428h-1ZM813 412h1V427h-1ZM814 412h1V434h-1ZM815 412h1V428h-1ZM816 411h1V427h-1ZM817 386h1V430h-1ZM818 412h1V427h-1ZM819 408h1V426h-1ZM820 412h1V427h-1ZM821 413h1V426h-1ZM822 413h1V426h-1ZM823 411h1V425h-1ZM824 412h1V426h-1ZM825 367h1V426h-1ZM826 412h1V427h-1ZM827 411h1V427h-1ZM828 412h1V426h-1ZM829 412h1V426h-1ZM830 412h1V428h-1ZM831 391h1V427h-1ZM832 410h1V426h-1ZM833 411h1V426h-1ZM834 412h1V425h-1ZM835 411h1V425h-1ZM836 412h1V424h-1ZM837 411h1V425h-1ZM838 373h1V426h-1ZM839 411h1V427h-1ZM840 412h1V425h-1ZM841 411h1V426h-1ZM842 411h1V424h-1ZM843 412h1V426h-1ZM844 376h1V428h-1ZM845 411h1V428h-1ZM846 411h1V427h-1ZM847 410h1V425h-1ZM848 410h1V424h-1ZM849 411h1V426h-1Z" fill="#10f810"/>
<rect x="634" y="138" width="1" height="376" fill="#c0c000"/>
<rect x="922" y="118" width="16" height="17" fill="#a19fa4"/>
<rect x="923" y="119" width="13" height="1" fill="#dcdcdc"/>
<rect x="923" y="119" width="1" height="14" fill="#dcdcdc"/>
<rect x="923" y="133" width="14" height="1" fill="#6c6a70"/>
<rect x="936" y="119" width="1" height="15" fill="#6c6a70"/>
<rect x="922" y="134" width="16" height="1" fill="#404040"/>
<rect x="937" y="118" width="1" height="17" fill="#404040"/>
<path d="M929 124h1v1h1v1h1v1h1v1h-7v-1h1v-1h1v-1h1z" fill="#000"/>
<rect x="922" y="135" width="16" height="17" fill="#a19fa4"/>
<rect x="923" y="136" width="13" height="1" fill="#dcdcdc"/>
<rect x="923" y="136" width="1" height="14" fill="#dcdcdc"/>
<rect x="923" y="150" width="14" height="1" fill="#6c6a70"/>
<rect x="936" y="136" width="1" height="15" fill="#6c6a70"/>
<rect x="922" y="151" width="16" height="1" fill="#404040"/>
<rect x="937" y="135" width="1" height="17" fill="#404040"/>
<path d="M926 141h7v1h-1v1h-1v1h-1v1h-1v-1h-1v-1h-1v-1h-1z" fill="#000"/>
<rect x="916" y="162" width="30" height="20" fill="#a19fa4"/>
<rect x="916" y="162" width="29" height="1" fill="#dcdcdc"/>
<rect x="916" y="162" width="1" height="19" fill="#dcdcdc"/>
<rect x="917" y="180" width="28" height="1" fill="#6c6a70"/>
<rect x="944" y="163" width="1" height="18" fill="#6c6a70"/>
<rect x="916" y="181" width="30" height="1" fill="#404040"/>
<rect x="945" y="162" width="1" height="20" fill="#404040"/>
<rect x="922" y="214" width="16" height="17" fill="#a19fa4"/>
<rect x="923" y="215" width="13" height="1" fill="#dcdcdc"/>
<rect x="923" y="215" width="1" height="14" fill="#dcdcdc"/>
<rect x="923" y="229" width="14" height="1" fill="#6c6a70"/>
<rect x="936" y="215" width="1" height="15" fill="#6c6a70"/>
<rect x="922" y="230" width="16" height="1" fill="#404040"/>
<rect x="937" y="214" width="1" height="17" fill="#404040"/>
<path d="M929 220h1v1h1v1h1v1h1v1h-7v-1h1v-1h1v-1h1z" fill="#000"/>
<rect x="922" y="231" width="16" height="17" fill="#a19fa4"/>
<rect x="923" y="232" width="13" height="1" fill="#dcdcdc"/>
<rect x="923" y="232" width="1" height="14" fill="#dcdcdc"/>
<rect x="923" y="246" width="14" height="1" fill="#6c6a70"/>
<rect x="936" y="232" width="1" height="15" fill="#6c6a70"/>
<rect x="922" y="247" width="16" height="1" fill="#404040"/>
<rect x="937" y="231" width="1" height="17" fill="#404040"/>
<path d="M926 237h7v1h-1v1h-1v1h-1v1h-1v-1h-1v-1h-1v-1h-1z" fill="#000"/>
<rect x="916" y="263" width="30" height="20" fill="#a19fa4"/>
<rect x="916" y="263" width="29" height="1" fill="#dcdcdc"/>
<rect x="916" y="263" width="1" height="19" fill="#dcdcdc"/>
<rect x="917" y="281" width="28" height="1" fill="#6c6a70"/>
<rect x="944" y="264" width="1" height="18" fill="#6c6a70"/>
<rect x="916" y="282" width="30" height="1" fill="#404040"/>
<rect x="945" y="263" width="1" height="20" fill="#404040"/>
<rect x="916" y="318" width="15" height="16" fill="#a19fa4"/>
<rect x="917" y="319" width="12" height="1" fill="#dcdcdc"/>
<rect x="917" y="319" width="1" height="13" fill="#dcdcdc"/>
<rect x="917" y="332" width="13" height="1" fill="#6c6a70"/>
<rect x="929" y="319" width="1" height="14" fill="#6c6a70"/>
<rect x="916" y="333" width="15" height="1" fill="#404040"/>
<rect x="930" y="318" width="1" height="16" fill="#404040"/>
<path d="M923 323h1v5h-1v-1h-1v-1h-1v-1h1v-1h1z" fill="#000"/>
<rect x="931" y="318" width="15" height="16" fill="#a19fa4"/>
<rect x="932" y="319" width="12" height="1" fill="#dcdcdc"/>
<rect x="932" y="319" width="1" height="13" fill="#dcdcdc"/>
<rect x="932" y="332" width="13" height="1" fill="#6c6a70"/>
<rect x="944" y="319" width="1" height="14" fill="#6c6a70"/>
<rect x="931" y="333" width="15" height="1" fill="#404040"/>
<rect x="945" y="318" width="1" height="16" fill="#404040"/>
<path d="M938 323h1v1h1v1h1v1h-1v1h-1v1h-1z" fill="#000"/>
<rect x="916" y="361" width="15" height="16" fill="#a19fa4"/>
<rect x="917" y="362" width="12" height="1" fill="#dcdcdc"/>
<rect x="917" y="362" width="1" height="13" fill="#dcdcdc"/>
<rect x="917" y="375" width="13" height="1" fill="#6c6a70"/>
<rect x="929" y="362" width="1" height="14" fill="#6c6a70"/>
<rect x="916" y="376" width="15" height="1" fill="#404040"/>
<rect x="930" y="361" width="1" height="16" fill="#404040"/>
<path d="M923 366h1v5h-1v-1h-1v-1h-1v-1h1v-1h1z" fill="#000"/>
<rect x="931" y="361" width="15" height="16" fill="#a19fa4"/>
<rect x="932" y="362" width="12" height="1" fill="#dcdcdc"/>
<rect x="932" y="362" width="1" height="13" fill="#dcdcdc"/>
<rect x="932" y="375" width="13" height="1" fill="#6c6a70"/>
<rect x="944" y="362" width="1" height="14" fill="#6c6a70"/>
<rect x="931" y="376" width="15" height="1" fill="#404040"/>
<rect x="945" y="361" width="1" height="16" fill="#404040"/>
<path d="M938 366h1v1h1v1h1v1h-1v1h-1v1h-1z" fill="#000"/>
<rect x="632" y="574" width="72" height="1" fill="#6c6a70"/>
<rect x="632" y="574" width="1" height="15" fill="#6c6a70"/>
<rect x="632" y="589" width="73" height="1" fill="#dcdcdc"/>
<rect x="704" y="574" width="1" height="16" fill="#dcdcdc"/>
<rect x="707" y="574" width="72" height="1" fill="#6c6a70"/>
<rect x="707" y="574" width="1" height="15" fill="#6c6a70"/>
<rect x="707" y="589" width="73" height="1" fill="#dcdcdc"/>
<rect x="779" y="574" width="1" height="16" fill="#dcdcdc"/>
<rect x="782" y="574" width="155" height="1" fill="#6c6a70"/>
<rect x="782" y="574" width="1" height="15" fill="#6c6a70"/>
<rect x="782" y="589" width="156" height="1" fill="#dcdcdc"/>
<rect x="937" y="574" width="1" height="16" fill="#dcdcdc"/>
<rect x="954" y="577" width="1" height="1" fill="#dcdcdc"/>
<rect x="953" y="578" width="1" height="1" fill="#dcdcdc"/>
<rect x="954" y="578" width="1" height="1" fill="#6c6a70"/>
<rect x="952" y="579" width="1" height="1" fill="#dcdcdc"/>
<rect x="953" y="579" width="1" height="1" fill="#6c6a70"/>
<rect x="954" y="579" width="1" height="1" fill="#6c6a70"/>
<rect x="951" y="580" width="1" height="1" fill="#dcdcdc"/>
<rect x="952" y="580" width="1" height="1" fill="#6c6a70"/>
<rect x="953" y="580" width="1" height="1" fill="#6c6a70"/>
<rect x="950" y="581" width="1" height="1" fill="#dcdcdc"/>
<rect x="951" y="581" width="1" height="1" fill="#6c6a70"/>
<rect x="952" y="581" width="1" height="1" fill="#6c6a70"/>
<rect x="954" y="581" width="1" height="1" fill="#dcdcdc"/>
<rect x="949" y="582" width="1" height="1" fill="#dcdcdc"/>
<rect x="950" y="582" width="1" height="1" fill="#6c6a70"/>
<rect x="951" y="582" width="1" height="1" fill="#6c6a70"/>
<rect x="953" y="582" width="1" height="1" fill="#dcdcdc"/>
<rect x="954" y="582" width="1" height="1" fill="#6c6a70"/>
<rect x="948" y="583" width="1" height="1" fill="#dcdcdc"/>
<rect x="949" y="583" width="1" height="1" fill="#6c6a70"/>
<rect x="950" y="583" width="1" height="1" fill="#6c6a70"/>
<rect x="952" y="583" width="1" height="1" fill="#dcdcdc"/>
<rect x="953" y="583" width="1" height="1" fill="#6c6a70"/>
<rect x="954" y="583" width="1" height="1" fill="#6c6a70"/>
<rect x="947" y="584" width="1" height="1" fill="#dcdcdc"/>
<rect x="948" y="584" width="1" height="1" fill="#6c6a70"/>
<rect x="949" y="584" width="1" height="1" fill="#6c6a70"/>
<rect x="951" y="584" width="1" height="1" fill="#dcdcdc"/>
<rect x="952" y="584" width="1" height="1" fill="#6c6a70"/>
<rect x="953" y="584" width="1" height="1" fill="#6c6a70"/>
<rect x="946" y="585" width="1" height="1" fill="#dcdcdc"/>
<rect x="947" y="585" width="1" height="1" fill="#6c6a70"/>
<rect x="948" y="585" width="1" height="1" fill="#6c6a70"/>
<rect x="950" y="585" width="1" height="1" fill="#dcdcdc"/>
<rect x="951" y="585" width="1" height="1" fill="#6c6a70"/>
<rect x="952" y="585" width="1" height="1" fill="#6c6a70"/>
<rect x="954" y="585" width="1" height="1" fill="#dcdcdc"/>
<rect x="945" y="586" width="1" height="1" fill="#dcdcdc"/>
<rect x="946" y="586" width="1" height="1" fill="#6c6a70"/>
<rect x="947" y="586" width="1" height="1" fill="#6c6a70"/>
<rect x="949" y="586" width="1" height="1" fill="#dcdcdc"/>
<rect x="950" y="586" width="1" height="1" fill="#6c6a70"/>
<rect x="951" y="586" width="1" height="1" fill="#6c6a70"/>
<rect x="953" y="586" width="1" height="1" fill="#dcdcdc"/>
<rect x="954" y="586" width="1" height="1" fill="#6c6a70"/>
<rect x="944" y="587" width="1" height="1" fill="#dcdcdc"/>
<rect x="945" y="587" width="1" height="1" fill="#6c6a70"/>
<rect x="946" y="587" width="1" height="1" fill="#6c6a70"/>
<rect x="948" y="587" width="1" height="1" fill="#dcdcdc"/>
<rect x="949" y="587" width="1" height="1" fill="#6c6a70"/>
<rect x="950" y="587" width="1" height="1" fill="#6c6a70"/>
<rect x="952" y="587" width="1" height="1" fill="#dcdcdc"/>
<rect x="953" y="587" width="1" height="1" fill="#6c6a70"/>
<rect x="954" y="587" width="1" height="1" fill="#6c6a70"/>
<rect x="943" y="588" width="1" height="1" fill="#dcdcdc"/>
<rect x="944" y="588" width="1" height="1" fill="#6c6a70"/>
<rect x="945" y="588" width="1" height="1" fill="#6c6a70"/>
<rect x="947" y="588" width="1" height="1" fill="#dcdcdc"/>
<rect x="948" y="588" width="1" height="1" fill="#6c6a70"/>
<rect x="949" y="588" width="1" height="1" fill="#6c6a70"/>
<rect x="951" y="588" width="1" height="1" fill="#dcdcdc"/>
<rect x="952" y="588" width="1" height="1" fill="#6c6a70"/>
<rect x="953" y="588" width="1" height="1" fill="#6c6a70"/>
<g filter="url(#tx)">
<text x="22.97" y="17" font-size="12" font-weight="bold" fill="#ffffff" textLength="80.91" lengthAdjust="spacingAndGlyphs" xml:space="preserve">Untitled - Arta</text>
<text x="9.06" y="36" font-size="11" font-weight="normal" fill="#000" textLength="16.63" lengthAdjust="spacingAndGlyphs" xml:space="preserve">File</text>
<text x="36.50" y="36" font-size="11" font-weight="normal" fill="#000" textLength="38.01" lengthAdjust="spacingAndGlyphs" xml:space="preserve">Overlay</text>
<text x="86.53" y="36" font-size="11" font-weight="normal" fill="#000" textLength="18.44" lengthAdjust="spacingAndGlyphs" xml:space="preserve">Edit</text>
<text x="117.50" y="36" font-size="11" font-weight="normal" fill="#000" textLength="21.39" lengthAdjust="spacingAndGlyphs" xml:space="preserve">View</text>
<text x="150.72" y="36" font-size="11" font-weight="normal" fill="#000" textLength="44.53" lengthAdjust="spacingAndGlyphs" xml:space="preserve">Recorder</text>
<text x="207.01" y="36" font-size="11" font-weight="normal" fill="#000" textLength="48.91" lengthAdjust="spacingAndGlyphs" xml:space="preserve">Generator</text>
<text x="267.57" y="36" font-size="11" font-weight="normal" fill="#000" textLength="29.50" lengthAdjust="spacingAndGlyphs" xml:space="preserve">Setup</text>
<text x="309.00" y="36" font-size="11" font-weight="normal" fill="#000" textLength="24.87" lengthAdjust="spacingAndGlyphs" xml:space="preserve">Tools</text>
<text x="344.40" y="36" font-size="11" font-weight="normal" fill="#000" textLength="27.43" lengthAdjust="spacingAndGlyphs" xml:space="preserve">Mode</text>
<text x="382.51" y="36" font-size="11" font-weight="normal" fill="#000" textLength="22.30" lengthAdjust="spacingAndGlyphs" xml:space="preserve">Help</text>
<text x="11.05" y="85" font-size="11" font-weight="normal" fill="#000" textLength="19.70" lengthAdjust="spacingAndGlyphs" xml:space="preserve">Gen</text>
<text x="131.03" y="85" font-size="11" font-weight="normal" fill="#000" textLength="32.04" lengthAdjust="spacingAndGlyphs" xml:space="preserve">Fs(Hz)</text>
<text x="238.93" y="85" font-size="11" font-weight="normal" fill="#000" textLength="17.62" lengthAdjust="spacingAndGlyphs" xml:space="preserve">FFT</text>
<text x="336.00" y="85" font-size="11" font-weight="normal" fill="#000" textLength="21.91" lengthAdjust="spacingAndGlyphs" xml:space="preserve">Wnd</text>
<text x="451.20" y="85" font-size="11" font-weight="normal" fill="#000" textLength="18.77" lengthAdjust="spacingAndGlyphs" xml:space="preserve">Avg</text>
<text x="41.90" y="86" font-size="11" font-weight="normal" fill="#000" textLength="19.72" lengthAdjust="spacingAndGlyphs" xml:space="preserve">Sine</text>
<text x="172.30" y="86" font-size="11" font-weight="normal" fill="#000" textLength="28.86" lengthAdjust="spacingAndGlyphs" xml:space="preserve">48000</text>
<text x="267.00" y="86" font-size="11" font-weight="normal" fill="#000" textLength="36.72" lengthAdjust="spacingAndGlyphs" xml:space="preserve">131072</text>
<text x="366.62" y="86" font-size="11" font-weight="normal" fill="#000" textLength="40.35" lengthAdjust="spacingAndGlyphs" xml:space="preserve">Hanning</text>
<text x="480.22" y="86" font-size="11" font-weight="normal" fill="#000" textLength="30.05" lengthAdjust="spacingAndGlyphs" xml:space="preserve">Linear</text>
<text x="552.21" y="85" font-size="11" font-weight="normal" fill="#000" textLength="28.54" lengthAdjust="spacingAndGlyphs" xml:space="preserve">Reset</text>
<text x="63.99" y="131" font-size="13" font-weight="normal" fill="#000" textLength="149.35" lengthAdjust="spacingAndGlyphs" xml:space="preserve">Spectrum magnitude dBV</text>
<text x="787.58" y="131" font-size="12" font-weight="normal" fill="#000" textLength="20.33" lengthAdjust="spacingAndGlyphs" xml:space="preserve">Left</text>
<text x="813.90" y="131" font-size="12" font-weight="normal" fill="#000" textLength="35.35" lengthAdjust="spacingAndGlyphs" xml:space="preserve">Avg:20</text>
<text x="33.67" y="142" font-size="12" font-weight="normal" fill="#000" textLength="24.00" lengthAdjust="spacingAndGlyphs" xml:space="preserve">20.0</text>
<text x="41.70" y="184" font-size="12" font-weight="normal" fill="#000" textLength="16.27" lengthAdjust="spacingAndGlyphs" xml:space="preserve">0.0</text>
<text x="28.22" y="226" font-size="12" font-weight="normal" fill="#000" textLength="29.46" lengthAdjust="spacingAndGlyphs" xml:space="preserve">-20.0</text>
<text x="28.22" y="268" font-size="12" font-weight="normal" fill="#000" textLength="29.46" lengthAdjust="spacingAndGlyphs" xml:space="preserve">-40.0</text>
<text x="28.22" y="310" font-size="12" font-weight="normal" fill="#000" textLength="29.46" lengthAdjust="spacingAndGlyphs" xml:space="preserve">-60.0</text>
<text x="28.22" y="351" font-size="12" font-weight="normal" fill="#000" textLength="29.46" lengthAdjust="spacingAndGlyphs" xml:space="preserve">-80.0</text>
<text x="21.21" y="393" font-size="12" font-weight="normal" fill="#000" textLength="37.22" lengthAdjust="spacingAndGlyphs" xml:space="preserve">-100.0</text>
<text x="21.21" y="435" font-size="12" font-weight="normal" fill="#000" textLength="37.22" lengthAdjust="spacingAndGlyphs" xml:space="preserve">-120.0</text>
<text x="21.21" y="477" font-size="12" font-weight="normal" fill="#000" textLength="37.22" lengthAdjust="spacingAndGlyphs" xml:space="preserve">-140.0</text>
<text x="21.21" y="519" font-size="12" font-weight="normal" fill="#000" textLength="37.22" lengthAdjust="spacingAndGlyphs" xml:space="preserve">-160.0</text>
<text x="55.50" y="533" font-size="12" font-weight="normal" fill="#000" xml:space="preserve">20</text>
<text x="160.03" y="533" font-size="12" font-weight="normal" fill="#000" xml:space="preserve">50</text>
<text x="236.10" y="533" font-size="12" font-weight="normal" fill="#000" xml:space="preserve">100</text>
<text x="315.17" y="533" font-size="12" font-weight="normal" fill="#000" xml:space="preserve">200</text>
<text x="419.69" y="533" font-size="12" font-weight="normal" fill="#000" xml:space="preserve">500</text>
<text x="502.26" y="533" font-size="12" font-weight="normal" fill="#000" xml:space="preserve">1k</text>
<text x="581.33" y="533" font-size="12" font-weight="normal" fill="#000" xml:space="preserve">2k</text>
<text x="685.86" y="533" font-size="12" font-weight="normal" fill="#000" xml:space="preserve">5k</text>
<text x="761.43" y="533" font-size="12" font-weight="normal" fill="#000" xml:space="preserve">10k</text>
<text x="840.50" y="533" font-size="12" font-weight="normal" fill="#000" xml:space="preserve">20k</text>
<text x="61.99" y="548" font-size="12" font-weight="normal" fill="#000" textLength="164.69" lengthAdjust="spacingAndGlyphs" xml:space="preserve">Cursor: 3000.00 Hz, -64.00 dB</text>
<text x="770.70" y="548" font-size="12" font-weight="normal" fill="#000" textLength="79.05" lengthAdjust="spacingAndGlyphs" xml:space="preserve">Frequency(Hz)</text>
<text x="61.81" y="566" font-size="12" font-weight="normal" fill="#cc0000" textLength="36.59" lengthAdjust="spacingAndGlyphs" xml:space="preserve">RMS =</text>
<text x="107.03" y="566" font-size="12" font-weight="normal" fill="#cc0000" textLength="48.20" lengthAdjust="spacingAndGlyphs" xml:space="preserve">+6.6 dBV</text>
<text x="168.30" y="566" font-size="12" font-weight="normal" fill="#cc0000" textLength="76.21" lengthAdjust="spacingAndGlyphs" xml:space="preserve">THD =0.035%</text>
<text x="257.50" y="566" font-size="12" font-weight="normal" fill="#cc0000" textLength="91.69" lengthAdjust="spacingAndGlyphs" xml:space="preserve">THD+N =0.038%</text>
<text x="922.00" y="110" font-size="11" font-weight="normal" fill="#000" textLength="17.85" lengthAdjust="spacingAndGlyphs" xml:space="preserve">Top</text>
<text x="924.00" y="176" font-size="11" font-weight="normal" fill="#000" textLength="12.23" lengthAdjust="spacingAndGlyphs" xml:space="preserve">Fit</text>
<text x="915.03" y="207" font-size="11" font-weight="normal" fill="#000" textLength="31.38" lengthAdjust="spacingAndGlyphs" xml:space="preserve">Range</text>
<text x="921.79" y="277" font-size="11" font-weight="normal" fill="#000" textLength="16.74" lengthAdjust="spacingAndGlyphs" xml:space="preserve">Set</text>
<text x="914.72" y="310" font-size="11" font-weight="normal" fill="#000" textLength="32.27" lengthAdjust="spacingAndGlyphs" xml:space="preserve">FrHigh</text>
<text x="917.83" y="355" font-size="11" font-weight="normal" fill="#000" textLength="29.72" lengthAdjust="spacingAndGlyphs" xml:space="preserve">FrLow</text>
<text x="4.82" y="586" font-size="11" font-weight="normal" fill="#000" textLength="31.18" lengthAdjust="spacingAndGlyphs" xml:space="preserve">Ready</text>
<text x="635.28" y="586" font-size="11" font-weight="normal" fill="#000" textLength="48.74" lengthAdjust="spacingAndGlyphs" xml:space="preserve">L:-29.6dB</text>
<text x="710.69" y="586" font-size="11" font-weight="normal" fill="#000" textLength="49.84" lengthAdjust="spacingAndGlyphs" xml:space="preserve">R:-83.3dB</text>
<text x="785.93" y="586" font-size="11" font-weight="normal" fill="#000" textLength="89.99" lengthAdjust="spacingAndGlyphs" xml:space="preserve">Spectrum Analyzer</text>
<text x="855.50" y="150" font-size="13" fill="#000">A</text>
<text x="854.50" y="164" font-size="13" fill="#000">R</text>
<text x="855.50" y="178" font-size="13" fill="#000">T</text>
<text x="855.50" y="192" font-size="13" fill="#000">A</text>
</g>
<rect x="86" y="83" width="90" height="17" fill="#000000"/>
<rect x="87" y="84" width="88" height="15" fill="#ffffe1"/>
<g filter="url(#tx)"><text x="87.92" y="96" font-size="11" font-weight="normal" fill="#000" textLength="84.79" lengthAdjust="spacingAndGlyphs" xml:space="preserve">Impulse response</text></g>
</svg>
</body></html>
